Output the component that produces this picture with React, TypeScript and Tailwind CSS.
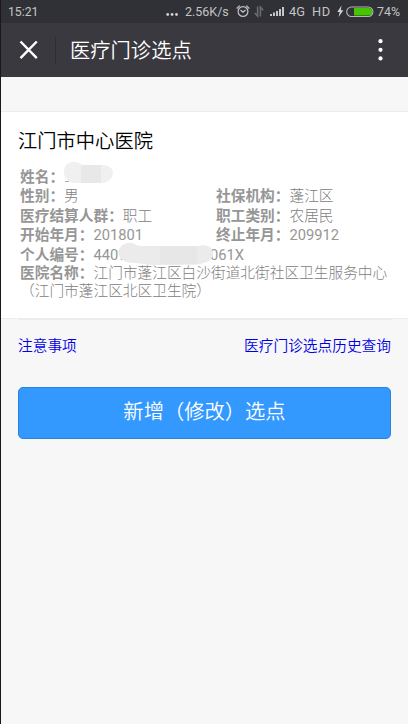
import React from 'react';

const details = [
  [{ label: '性别：', value: '男' }, { label: '社保机构：', value: '蓬江区' }],
  [{ label: '医疗结算人群：', value: '职工' }, { label: '职工类别：', value: '农居民' }],
  [{ label: '开始年月：', value: '201801', numeric: true }, { label: '终止年月：', value: '209912', numeric: true }]
];

const StatusBar = () => {
  return <div className="flex h-[23px] items-center bg-[#303136] pl-[7px] text-[12.5px] leading-[23px] text-[#c4c4c6]">
      <span className="w-[158px] pt-px text-[12.2px]">15:21</span>
      <svg width="12" height="23" viewBox="0 0 12 23" fill="#d0d0d2" className="mr-[7px]">
        <circle cx="1.7" cy="14.5" r="1.4" />
        <circle cx="6.1" cy="14.5" r="1.4" />
        <circle cx="10.5" cy="14.5" r="1.4" />
      </svg>
      <span className="w-[51px] whitespace-nowrap">2.56K/s</span>
      {/* Alarm */}
      <svg width="14" height="23" viewBox="0 0 14 23" fill="none" stroke="#c4c4c6" strokeWidth="1.2" strokeLinecap="round">
        <circle cx="7" cy="11.5" r="4.9" />
        <path d="M1 8.2 3.4 5.9M13 8.2 10.6 5.9M4.8 10.3 7 12.3 9.3 10.3" />
      </svg>
      {/* Data arrows */}
      <svg width="10" height="23" viewBox="0 0 10 23" fill="none" stroke="#6d6e72" strokeWidth="1.5" className="ml-[4px]">
        <path d="M3.6 6.5v9.5L.8 13M6.4 16.5V7l2.8 3.2" />
      </svg>
      {/* Signal */}
      <svg width="15" height="23" viewBox="0 0 15 23" fill="#c4c4c6" className="ml-[6px]">
        <path d="M0 14h2v2H0zM3 12.5h2V16H3zM6 11h2v5H6zM9 9h2v7H9zM12 7h2v9h-2z" />
      </svg>
      <span className="ml-[4px] w-[23px] text-[12.8px]">4G</span>
      <span className="w-[25px] text-[12.8px] tracking-[0.5px]">HD</span>
      <svg width="7" height="23" viewBox="0 0 7 23" fill="#d0d0d2">
        <path d="M4.5 5.5 .3 12h2.4L1.6 17l4.8-6.7H3.9z" />
      </svg>
      <svg width="28" height="23" viewBox="0 0 28 23" className="ml-[2px] mr-[3px]">
        <rect x=".7" y="7" width="26.2" height="9.5" rx="4.7" fill="none" stroke="#b8b8ba" strokeWidth="1.1" />
        <path d="M8 8h14.5a3.7 3.7 0 0 1 0 7.5H8z" fill="#45c400" />
      </svg>
      <span className="text-[12.4px]">74%</span>
    </div>;
};

const Header = () => {
  return <header className="flex h-[54px] items-center bg-[#39393f] text-white">
      <button className="ml-[18px]" aria-label="关闭">
        <svg width="20" height="20" viewBox="0 0 20 20" fill="none" stroke="#fff" strokeWidth="2.4" className="block">
          <path d="M1.5 1.5 17.8 18.2M17.8 1.5 1.5 18.2" />
        </svg>
      </button>
      <span className="ml-[16px] h-[27px] w-px bg-[#2d2d32]" />
      <h1 className="ml-[14px] pt-px text-[20.3px] font-[350] leading-[54px]">医疗门诊选点</h1>
      <button className="ml-auto mr-[25px]" aria-label="更多">
        <svg width="5" height="24" viewBox="0 0 5 24" fill="#fff" className="block">
          <circle cx="2.5" cy="3.2" r="2.1" />
          <circle cx="2.5" cy="11.8" r="2.1" />
          <circle cx="2.5" cy="20.4" r="2.1" />
        </svg>
      </button>
    </header>;
};

const Field = ({ label, value, numeric }: { label: string; value: string; numeric?: boolean }) => {
  return <div className="whitespace-nowrap">
      <b className="font-bold text-[#969696]">{label}</b>
      <span className={numeric ? 'font-normal text-[#969696]' : ''}>{value}</span>
    </div>;
};

export default function App() {
  return <div className="h-[724px] w-[408px] overflow-hidden border-l border-[#1b181b] bg-[#f7f7f7] font-['Roboto','Noto_Sans_CJK_SC',sans-serif]">
      <StatusBar />
      <Header />
      {/* Hospital card */}
      <section className="mt-[34px] h-[208px] border-y border-[#ececec] bg-white pl-[17px] pt-[15px]">
        <h2 className="h-[41px] text-[19.3px] font-[350] leading-[30px] text-black">江门市中心医院</h2>
        <div className="pl-[2px] text-[14.7px] font-light leading-[19.4px] text-[#808080]">
          <div className="relative">
            <b className="font-bold text-[#969696]">姓名：</b>
            <svg width="51" height="24" viewBox="0 0 51 24" className="absolute left-[43px] top-[-7px]">
              <path d="M9 1C14 0 17 3 20 4h20c13 0 13 15 0 18H10C-2 19-2 3 9 1z" fill="#f0f0f0" />
              <path d="M18 4h20v18H18z" fill="#e8e8e8" />
              <path d="M2 20h4v1H2z" fill="#aaa" />
            </svg>
          </div>
          {details.map(row => <div key={row[0].label} className="grid grid-cols-[196px_1fr]">
              {row.map(item => <Field key={item.label} {...item} />)}
            </div>)}
          <div className="relative whitespace-nowrap font-normal text-[#969696]">
            <b className="font-bold">个人编号：</b>440?
            <span className="absolute left-[190px] top-0">061X</span>
            <svg width="96" height="24" viewBox="0 0 96 24" className="absolute left-[98px] top-[-4px]">
              <path d="M10 1c6-1 8 3 12 3h58c18-5 20 15 5 17-7 3-17 1-22 2H34c-5 0-12-2-18-2C-4 21-3 3 10 1z" fill="#ebebeb" />
              <path d="M42 4h37v18H42z" fill="#e7e7e7" />
            </svg>
          </div>
          <p className="whitespace-nowrap leading-[17.5px]">
            <b className="font-bold text-[#969696]">医院名称：</b>江门市蓬江区白沙街道北街社区卫生服务中心<br />（江门市蓬江区北区卫生院）
          </p>
        </div>
      </section>
      {/* Links */}
      <div className="mx-[17px] h-px bg-[#ececec]" />
      <nav className="mx-[17px] flex justify-between text-[14.7px] font-[350] leading-[53px] text-[#0000e6]">
        <a href="#">注意事项</a>
        <a href="#">医疗门诊选点历史查询</a>
      </nav>
      <button className="ml-[17px] mt-[14px] block h-[52px] w-[373px] rounded-[5px] border border-[#2b83db] bg-[#3399ff] text-[20.3px] font-[350] leading-[48px] text-white">
        <span className="block pb-[2px]">新增（修改）选点</span>
      </button>
    </div>;
}
